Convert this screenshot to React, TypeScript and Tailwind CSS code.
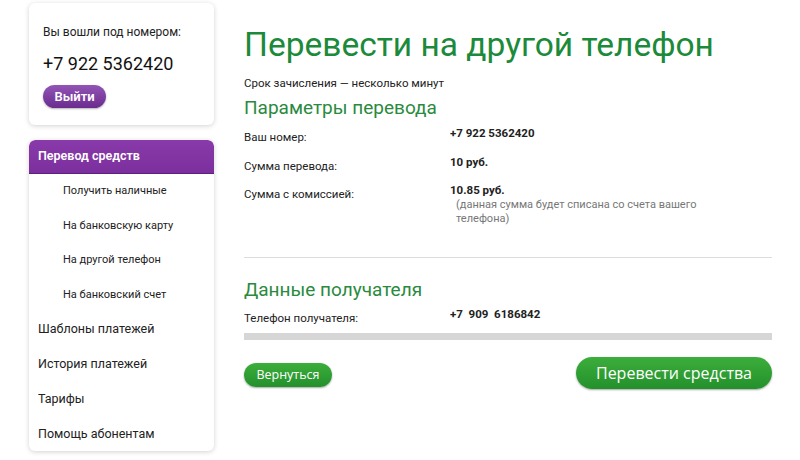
import React from "react";

const subItems = [
  "Получить наличные",
  "На банковскую карту",
  "На другой телефон",
  "На банковский счет",
];

const mainItems = [
  "Шаблоны платежей",
  "История платежей",
  "Тарифы",
  "Помощь абонентам",
];

function Row({
  label,
  value,
  note,
}: {
  label: string;
  value: string;
  note?: string;
}) {
  return (
    <div className="flex">
      <div className="w-[206px] pt-[4px] text-[11.5px] text-[#222]">{label}</div>
      <div className="flex-1">
        <div className="whitespace-pre text-[11.5px] font-bold text-[#222]">{value}</div>
        {note && (
          <div className="mt-[-1px] w-[260px] pl-[6px] text-[11px] leading-[14px] text-[#777]">
            {note}
          </div>
        )}
      </div>
    </div>
  );
}

export default function App() {
  return (
    <div
      className="flex h-[460px] w-[800px] gap-[30px] bg-white pl-[29px] pt-[3px]"
      style={{ fontFamily: "Roboto, 'Liberation Sans', sans-serif" }}
    >
      {/* левая колонка */}
      <div className="flex w-[185px] flex-col gap-[15px]">
        <div className="h-[122px] rounded-md bg-white px-[14px] pt-[20px] shadow-[0_1px_5px_rgba(0,0,0,0.18)]">
          <div className="text-[12px] text-[#222]">Вы вошли под номером:</div>
          <div className="mt-[9px] text-[18px] text-[#111]">+7 922 5362420</div>
          <button className="mt-[8px] h-[23px] w-[63px] rounded-full bg-gradient-to-b from-[#9254b5] to-[#6b2b8f] text-[13px] font-semibold text-white shadow-[0_1px_2px_rgba(0,0,0,0.3)]">
            Выйти
          </button>
        </div>

        <div className="h-[311px] overflow-hidden rounded-md bg-white shadow-[0_1px_5px_rgba(0,0,0,0.18)]">
          <div className="flex h-[34px] items-center rounded-t-md border-b border-[#5e1f80] bg-gradient-to-b from-[#8a3aaa] to-[#7b2f9d] px-[9px] text-[12.5px] font-semibold text-white">
            Перевод средств
          </div>
          <div className="flex flex-col">
            {subItems.map((s) => (
              <div
                key={s}
                className="flex h-[34.5px] items-center pl-[34px] text-[11px] text-[#222]"
              >
                {s}
              </div>
            ))}
            {mainItems.map((s) => (
              <div
                key={s}
                className="flex h-[35px] items-center pl-[9px] text-[12.5px] text-[#222]"
              >
                {s}
              </div>
            ))}
          </div>
        </div>
      </div>

      {/* основная часть */}
      <div className="flex w-[528px] flex-col">
        <h1 className="mt-[22px] text-[33.5px] leading-[40px] text-[#1b8a3a]">
          Перевести на другой телефон
        </h1>
        <div className="mt-[10px] text-[11.5px] text-[#222]">
          Срок зачисления — несколько минут
        </div>
        <h2 className="mt-[4px] text-[19px] leading-[24px] text-[#2a8a3e]">
          Параметры перевода
        </h2>
        <div className="mt-[5px] flex flex-col gap-[7px]">
          <Row label="Ваш номер:" value="+7 922 5362420" />
          <Row label="Сумма перевода:" value="10 руб." />
          <Row
            label="Сумма с комиссией:"
            value="10.85 руб."
            note="(данная сумма будет списана со счета вашего телефона)"
          />
        </div>
        <div className="mt-[31px] h-px bg-[#dcdcdc]" />
        <h2 className="mt-[20px] text-[19px] leading-[24px] text-[#2a8a3e]">
          Данные получателя
        </h2>
        <div className="mt-[4px]">
          <Row label="Телефон получателя:" value="+7  909  6186842" />
        </div>
        <div className="mt-[6px] h-[7px] bg-[#d6d6d6]" />
        <div className="mt-[17px] flex items-center justify-between">
          <button
            className="mt-[4px] h-[24px] w-[88px] rounded-full bg-gradient-to-b from-[#3cae3c] to-[#23902b] text-[12.5px] text-white shadow-[0_1px_2px_rgba(0,0,0,0.35)]"
            style={{ fontFamily: "'Open Sans', sans-serif" }}
          >
            Вернуться
          </button>
          <button
            className="h-[32px] w-[196px] rounded-full bg-gradient-to-b from-[#3cae3c] to-[#23902b] text-[16px] text-white shadow-[0_1px_2px_rgba(0,0,0,0.35)]"
            style={{ fontFamily: "'Open Sans', sans-serif" }}
          >
            Перевести средства
          </button>
        </div>
      </div>
    </div>
  );
}
